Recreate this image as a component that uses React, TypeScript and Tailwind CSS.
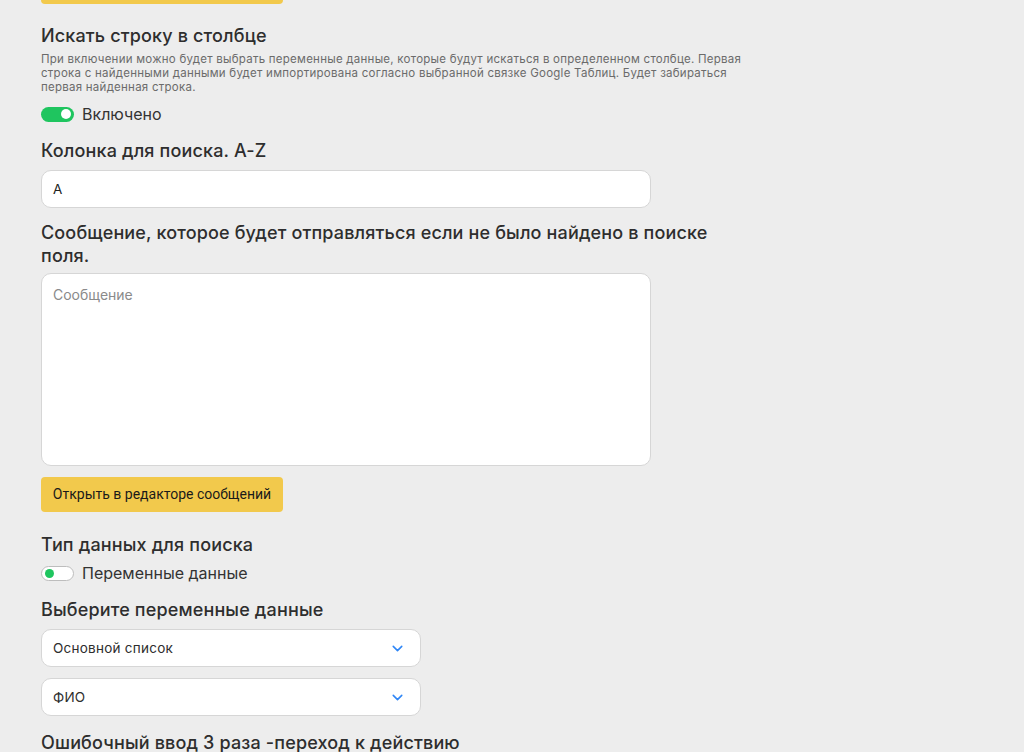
import { ChevronDown } from "lucide-react";

function Toggle({ on }: { on: boolean }) {
  return on ? (
    <span className="relative inline-block w-[33px] h-[15px] rounded-full bg-[#1fc55f]">
      <span className="absolute right-[3px] top-[2.5px] w-[10px] h-[10px] rounded-full bg-white" />
    </span>
  ) : (
    <span className="relative inline-block w-[33px] h-[15px] rounded-full bg-white border border-[#bdbdbd]">
      <span className="absolute left-[3px] top-[2px] w-[9px] h-[9px] rounded-full bg-[#1fc55f]" />
    </span>
  );
}

function Heading({ children, className = "" }: { children: React.ReactNode; className?: string }) {
  return (
    <h3 className={`text-[18px] leading-[23px] font-medium tracking-[0.15px] text-[#2e2e2e] max-w-[700px] ${className}`}>
      {children}
    </h3>
  );
}

function Select({ value, className = "" }: { value: string; className?: string }) {
  return (
    <div className={`w-[380px] h-[38px] bg-white border border-[#d6d6d6] rounded-[10px] flex items-center justify-between pl-[11px] pr-[14px] ${className}`}>
      <span className="text-[13.5px] tracking-[0.25px] text-[#2e2e2e]">{value}</span>
      <ChevronDown size={17} strokeWidth={2.2} className="text-[#2f86f6]" />
    </div>
  );
}

export default function App() {
  return (
    <div className="min-h-[752px] h-[752px] overflow-hidden bg-[#ededed] px-[41px] font-['Inter',sans-serif]">
      <button className="block -mt-[31px] w-[242px] h-[35px] rounded-[4px] bg-[#f2c94c]" />

      <Heading className="mt-[20px]">Искать строку в столбце</Heading>
      <p className="mt-[5px] max-w-[710px] text-[11.5px] leading-[14px] tracking-[0.25px] text-[#6b6b6b]">
        При включении можно будет выбрать переменные данные, которые будут искаться в определенном столбце. Первая строка с найденными данными будет импортирована согласно выбранной связке Google Таблиц. Будет забираться первая найденная строка.
      </p>
      <div className="mt-[10px] h-[20px] flex items-center gap-[8px]">
        <Toggle on />
        <span className="text-[16px] text-[#333]">Включено</span>
      </div>

      <Heading className="mt-[15px]">Колонка для поиска. A-Z</Heading>
      <div className="mt-[8px] w-[610px] h-[38px] bg-white border border-[#d6d6d6] rounded-[10px] flex items-center px-[11px]">
        <span className="text-[13.5px] text-[#222]">A</span>
      </div>

      <Heading className="mt-[13px] w-[700px]">
        Сообщение, которое будет отправляться если не было найдено в поиске поля.
      </Heading>
      <div className="mt-[6px] w-[610px] h-[193px] bg-white border border-[#d6d6d6] rounded-[10px] px-[11px] pt-[8px]">
        <span className="text-[14px] text-[#8a8a8a]">Сообщение</span>
      </div>
      <button className="mt-[11px] block w-[242px] h-[35px] rounded-[4px] bg-[#f2c94c] text-[14px] text-[#1a1a1a] font-['Roboto',sans-serif]">
        Открыть в редакторе сообщений
      </button>

      <Heading className="mt-[21px]">Тип данных для поиска</Heading>
      <div className="mt-[7px] h-[20px] flex items-center gap-[8px]">
        <Toggle on={false} />
        <span className="text-[16px] text-[#333]">Переменные данные</span>
      </div>

      <Heading className="mt-[15px]">Выберите переменные данные</Heading>
      <Select value="Основной список" className="mt-[8px]" />
      <Select value="ФИО" className="mt-[11px]" />

      <Heading className="mt-[15px]">Ошибочный ввод 3 раза -переход к действию</Heading>
    </div>
  );
}
